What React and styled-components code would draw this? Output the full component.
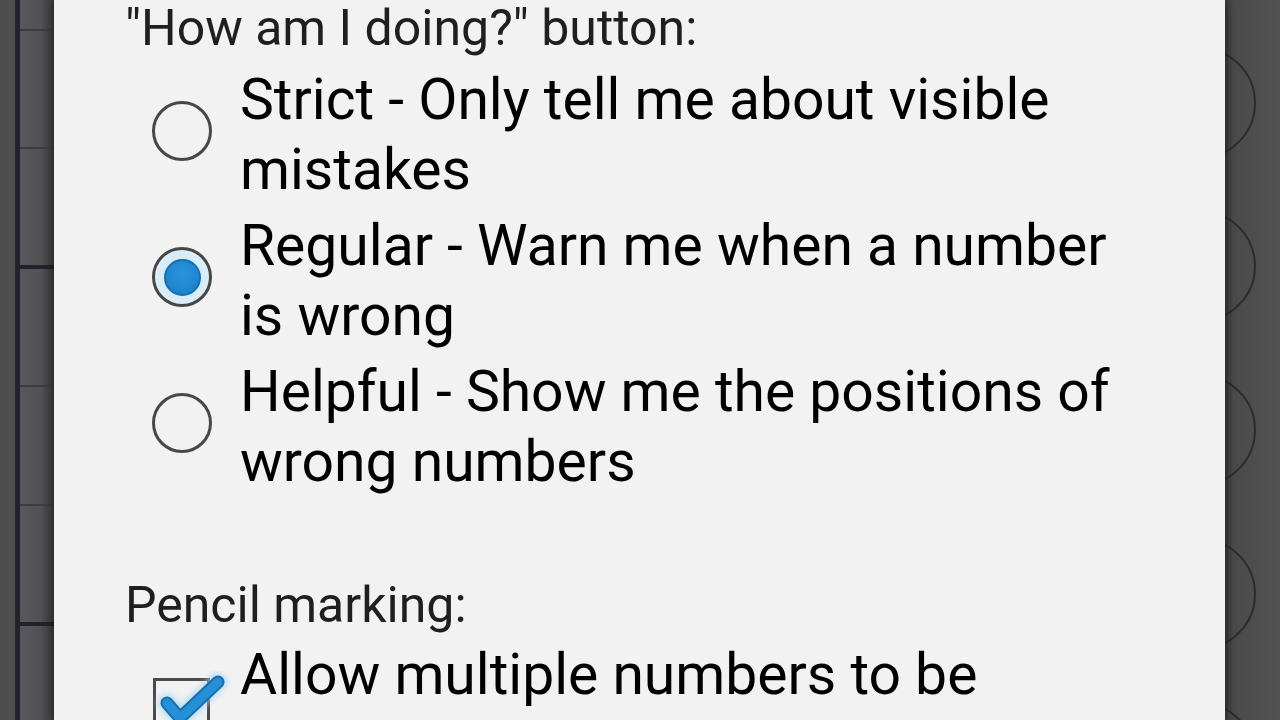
import React from "react";
import styled, { createGlobalStyle } from "styled-components";

const GlobalStyle = createGlobalStyle`
  html, body {
    margin: 0;
    padding: 0;
    background: #4f4f4f;
    overflow: hidden;
  }
  body {
    font-family: Roboto, "Noto Sans", sans-serif;
  }
`;

const Screen = styled.div`
  display: flex;
  width: 1280px;
  height: 720px;
  overflow: hidden;
`;

const BoardStrip = styled.div`
  flex: 0 0 ${(p) => p.$width}px;
  height: 720px;
  background: #4f4f4f;
  svg {
    display: block;
  }
`;

const Dialog = styled.div`
  flex: 1;
  height: 720px;
  background: #f2f2f2;
  padding-left: 71px;
  box-sizing: border-box;
  box-shadow: 0 0 10px rgba(0, 0, 0, 0.45);
  position: relative;
  overflow: hidden;
`;

const SectionLabel = styled.div`
  font-size: 50px;
  line-height: 56px;
  color: #1f1f1f;
  margin-top: ${(p) => p.$top || 0}px;
`;

const OptionList = styled.div`
  display: flex;
  flex-direction: column;
  gap: 6px;
  margin-top: 9px;
  padding-left: 27px;
`;

const OptionRow = styled.div`
  display: flex;
  align-items: center;
  gap: 28px;
`;

const OptionText = styled.div`
  font-size: 57px;
  line-height: 70px;
  color: #000;
  width: 900px;
`;

const RadioMark = styled.span`
  flex: 0 0 60px;
  width: 60px;
  height: 60px;
  box-sizing: border-box;
  border-radius: 50%;
  border: 3px solid #474747;
  margin-bottom: 8px;
  display: flex;
  align-items: center;
  justify-content: center;
  background: ${(p) =>
    p.$checked
      ? "radial-gradient(circle, #cfe6f6 0%, #d8ecf8 60%, #eef5fa 100%)"
      : "transparent"};
`;

const RadioDot = styled.span`
  width: 37px;
  height: 37px;
  box-sizing: border-box;
  border-radius: 50%;
  background: radial-gradient(circle at 50% 40%, #2a94da 0%, #1b86cf 70%, #1470b2 100%);
  border: 2px solid #166fae;
`;

const CheckRow = styled(OptionRow)`
  padding-left: 28px;
  margin-top: 7px;
  gap: 30px;
  align-items: flex-start;
`;

const CheckBox = styled.span`
  flex: 0 0 57px;
  width: 57px;
  height: 57px;
  box-sizing: border-box;
  border: 3px solid #4a4a4a;
  margin-top: 38px;
  position: relative;
  svg {
    position: absolute;
    left: -3px;
    top: -13px;
    overflow: visible;
  }
`;

const LeftBoard = () => {
  const thin = [30, 148, 386, 505];
  const thick = [267, 624];
  return (
    <svg width="54" height="720">
      <defs>
        <linearGradient id="lshade" x1="0" x2="1" y1="0" y2="0">
          <stop offset="0" stopColor="#58585c" />
          <stop offset="0.6" stopColor="#525255" />
          <stop offset="1" stopColor="#3a3a3b" />
        </linearGradient>
      </defs>
      <rect x="0" y="0" width="15" height="720" fill="#4e4e4e" />
      <rect x="20" y="0" width="34" height="720" fill="url(#lshade)" />
      <rect x="15" y="0" width="5" height="720" fill="#22212c" />
      {thin.map((y) => (
        <rect key={y} x="20" y={y - 1} width="34" height="2" fill="#3c3c40" />
      ))}
      {thick.map((y) => (
        <rect key={y} x="20" y={y - 2} width="34" height="4" fill="#22212c" />
      ))}
    </svg>
  );
};

const RightBoard = () => {
  const centers = [103, 266, 430, 594, 758];
  return (
    <svg width="55" height="720">
      <defs>
        <linearGradient id="rshade" x1="0" x2="1" y1="0" y2="0">
          <stop offset="0" stopColor="#3a3a3a" />
          <stop offset="0.15" stopColor="#4a4a4a" />
          <stop offset="1" stopColor="#525252" />
        </linearGradient>
      </defs>
      <rect x="0" y="0" width="55" height="720" fill="url(#rshade)" />
      {centers.map((cy) => (
        <circle key={cy} cx="-25" cy={cy} r="55" fill="none" stroke="#2c2c2c" strokeWidth="2" />
      ))}
    </svg>
  );
};

const CHECK = "M14 35 L27 50 L65 14";

const CheckIcon = () => (
  <svg width="75" height="60" viewBox="0 0 75 60">
    <defs>
      <filter id="glow" x="-30%" y="-30%" width="160%" height="160%">
        <feGaussianBlur stdDeviation="3" />
      </filter>
    </defs>
    <path d={CHECK} fill="none" stroke="#a6d4f2" strokeWidth="18" strokeLinecap="round" strokeLinejoin="round" filter="url(#glow)" opacity="0.75" />
    <path d={CHECK} fill="none" stroke="#1670ad" strokeWidth="13" strokeLinecap="round" strokeLinejoin="round" />
    <path d={CHECK} fill="none" stroke="#2590d6" strokeWidth="9" strokeLinecap="round" strokeLinejoin="round" />
  </svg>
);

const options = [
  { label: "Strict - Only tell me about visible mistakes", checked: false },
  { label: "Regular - Warn me when a number is wrong", checked: true },
  { label: "Helpful - Show me the positions of wrong numbers", checked: false },
];

const App = () => {
  return (
    <>
      <GlobalStyle />
      <Screen>
        <BoardStrip $width={54}>
          <LeftBoard />
        </BoardStrip>
        <Dialog>
          <SectionLabel>"How am I doing?" button:</SectionLabel>
          <OptionList>
            {options.map((o) => (
              <OptionRow key={o.label}>
                <RadioMark $checked={o.checked}>{o.checked && <RadioDot />}</RadioMark>
                <OptionText>{o.label}</OptionText>
              </OptionRow>
            ))}
          </OptionList>
          <SectionLabel $top={80}>Pencil marking:</SectionLabel>
          <CheckRow>
            <CheckBox>
              <CheckIcon />
            </CheckBox>
            <OptionText>Allow multiple numbers to be entered in a single cell</OptionText>
          </CheckRow>
        </Dialog>
        <BoardStrip $width={55}>
          <RightBoard />
        </BoardStrip>
      </Screen>
    </>
  );
};

export default App;
